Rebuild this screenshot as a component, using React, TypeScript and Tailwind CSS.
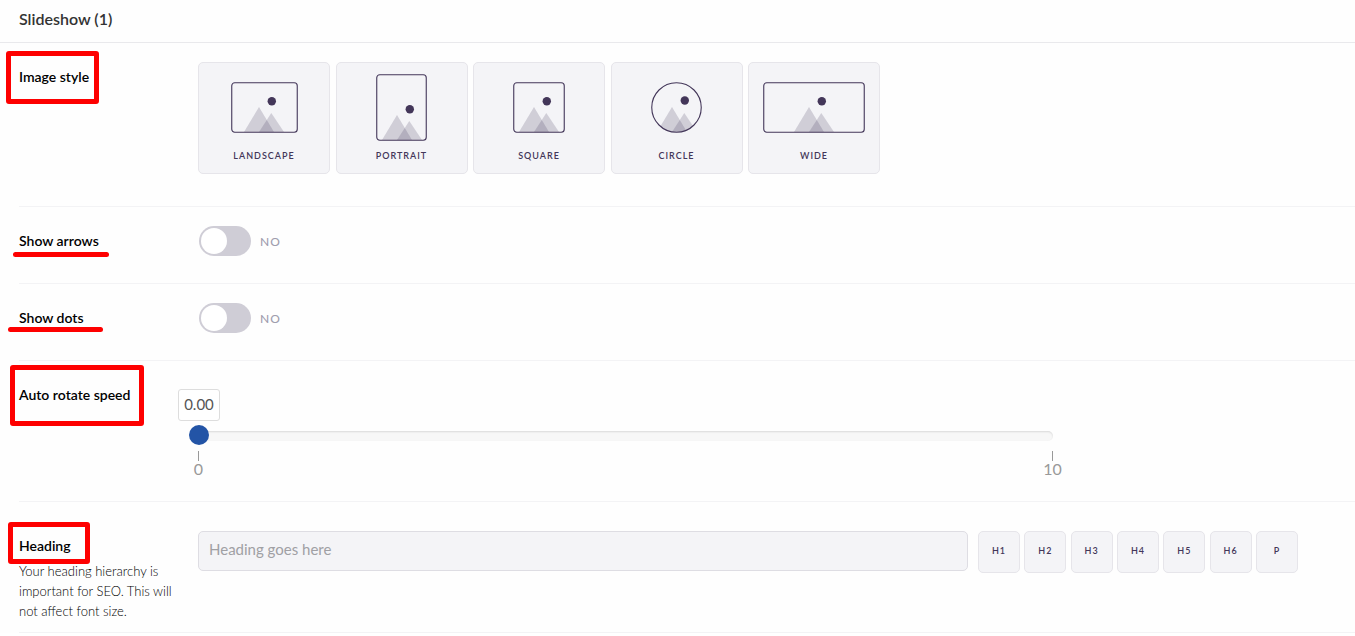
import React from "react";

const imageStyles = [
  { id: "landscape", label: "Landscape", width: 67, height: 51, peak: 28 },
  { id: "portrait", label: "Portrait", width: 51, height: 67, peak: 21 },
  { id: "square", label: "Square", width: 52, height: 51, peak: 21 },
  { id: "circle", label: "Circle", width: 51, height: 51, peak: 21 },
  { id: "wide", label: "Wide", width: 102, height: 51, peak: 46 },
];

const headingTags = ["H1", "H2", "H3", "H4", "H5", "H6", "P"];

type FrameProps = {
  id: string;
  width: number;
  height: number;
  peak: number;
};

const FrameIcon: React.FC<FrameProps> = ({ id, width, height, peak }) => {
  const round = id === "circle";
  return (
    <svg width={width} height={height} viewBox={`0 0 ${width} ${height}`} fill="none">
      <clipPath id={`clip-${id}`}>
        <rect width={width} height={height} rx={round ? width / 2 : 3} />
      </clipPath>
      <g clipPath={`url(#clip-${id})`}>
        <g transform={`translate(${peak} ${height - 1})`} fill="#433659">
          <path d="M0 -25 L15 0 H-15 Z" fillOpacity="0.2" />
          <path d="M12.3 -19 L25 0 H0 Z" fillOpacity="0.2" />
          <circle cx="12.8" cy={round ? -31.5 : -30.7} r="4.2" />
        </g>
      </g>
      <rect
        x="0.75"
        y="0.75"
        width={width - 1.5}
        height={height - 1.5}
        rx={round ? width / 2 : 3}
        stroke="#433659"
        strokeWidth="1.1"
      />
    </svg>
  );
};

type RowProps = {
  label: string;
  htmlFor?: string;
  help?: string;
  mark: string;
  className: string;
  children: React.ReactNode;
};

const Row: React.FC<RowProps> = ({ label, htmlFor, help, mark, className, children }) => (
  <div className={`relative ml-[19px] flex border-b border-[#f3f3f5] ${className}`}>
    <div className="w-[179px] shrink-0 pt-[5px] pr-5">
      <label htmlFor={htmlFor} className="block text-[14px] leading-5 font-semibold text-black">
        {label}
      </label>
      {help && <p className="mt-[5px] text-[13px] leading-5 font-light text-black">{help}</p>}
    </div>
    <div className="min-w-0 flex-1 pr-[57px]">{children}</div>
    <span className={`pointer-events-none absolute ${mark}`} />
  </div>
);

const Toggle: React.FC<{ id: string }> = ({ id }) => {
  const [on, setOn] = React.useState(false);
  return (
    <div className="flex items-center gap-[9px] pl-px">
      <input
        id={id}
        type="checkbox"
        checked={on}
        onChange={(e) => setOn(e.target.checked)}
        className="h-[30px] w-[52px] appearance-none rounded-full bg-[#cfcdd6] p-[2px] before:block before:size-[26px] before:rounded-full before:bg-white checked:bg-[#2354a6] checked:before:ml-[22px]"
      />
      <span className="pt-[2px] text-[12px] leading-5 font-medium tracking-[1px] text-[#a09dae]">
        {on ? "YES" : "NO"}
      </span>
    </div>
  );
};

export default function App() {
  const [speed, setSpeed] = React.useState(0);

  return (
    <div className="bg-[#fefefe] font-['Lato',sans-serif]">
      <header className="border-b border-[#e9e9ec] px-[19px] pt-[7px] pb-[11px]">
        <h1 className="text-[16px] leading-6 font-semibold text-[#333]">Slideshow (1)</h1>
      </header>

      <Row
        label="Image style"
        className="pt-[19px] pb-8"
        mark="top-2 -left-[13px] h-[53px] w-[93px] rounded-[3px] border-[5px] border-[#fe0000]"
      >
        <div className="flex max-w-[682px] justify-between">
          {imageStyles.map((style) => (
            <button
              key={style.id}
              type="button"
              className="flex h-[112px] w-[132px] flex-col items-center rounded-[5px] border border-[#e6e5ea] bg-[#f4f4f7] pt-[11px]"
            >
              <span className="flex h-[67px] items-center">
                <FrameIcon
                  id={style.id}
                  width={style.width}
                  height={style.height}
                  peak={style.peak}
                />
              </span>
              <span className="mt-[7px] text-[9px] leading-4 font-semibold tracking-[1px] text-[#433659] uppercase">
                {style.label}
              </span>
            </button>
          ))}
        </div>
      </Row>

      <Row
        label="Show arrows"
        htmlFor="arrows"
        className="pt-[19px] pb-[27px]"
        mark="top-[45px] -left-[6px] h-[5px] w-24 rounded-full bg-[#fe0000]"
      >
        <Toggle id="arrows" />
      </Row>

      <Row
        label="Show dots"
        htmlFor="dots"
        className="pt-[19px] pb-[27px]"
        mark="top-[43px] -left-[11px] h-[5px] w-[95px] rounded-full bg-[#fe0000]"
      >
        <Toggle id="dots" />
      </Row>

      <Row
        label="Auto rotate speed"
        htmlFor="speed"
        className="pt-[19px] pb-[22px]"
        mark="top-1 -left-[9px] h-[61px] w-[134px] rounded-[3px] border-[5px] border-[#fe0000]"
      >
        <div className="max-w-[855px] pt-[9px]">
          <output
            htmlFor="speed"
            className="-ml-5 flex h-8 w-[42px] items-center justify-center rounded-[3px] border border-[#dddddd] bg-white pb-[2px] text-[15px] leading-5 text-[#555]"
          >
            {speed.toFixed(2)}
          </output>
          <div className="relative mt-[10px] h-[10px] rounded-[5px] bg-[#f7f7f7] shadow-[inset_0_1px_2px_rgba(0,0,0,0.12)]">
            <input
              id="speed"
              type="range"
              min="0"
              max="10"
              step="0.5"
              value={speed}
              onChange={(e) => setSpeed(Number(e.target.value))}
              className="absolute -top-[6px] -left-[9px] h-5 w-[calc(100%+18px)] appearance-none bg-transparent [&::-webkit-slider-thumb]:size-5 [&::-webkit-slider-thumb]:appearance-none [&::-webkit-slider-thumb]:rounded-full [&::-webkit-slider-thumb]:bg-[#2354a6]"
            />
          </div>
          <div className="-mx-[10px] mt-[10px] flex justify-between text-[16px] leading-4 text-[#999]">
            {[0, 10].map((tick) => (
              <span key={tick} className="flex w-[21px] flex-col items-center pb-[2px]">
                <span className="h-[10px] w-px bg-[#999]" />
                {tick}
              </span>
            ))}
          </div>
        </div>
      </Row>

      <Row
        label="Heading"
        htmlFor="heading"
        help="Your heading hierarchy is important for SEO. This will not affect font size."
        className="pt-[29px] pb-[11px]"
        mark="top-5 -left-[11px] h-[42px] w-[82px] rounded-[3px] border-[5px] border-[#fe0000]"
      >
        <div className="flex items-start gap-[10px]">
          <input
            id="heading"
            type="text"
            placeholder="Heading goes here"
            className="h-10 min-w-0 flex-1 rounded-[5px] border border-[#dedde3] bg-[#f4f4f7] px-[10px] pb-1 text-[15px] text-[#333] placeholder:text-[#a0a0a4]"
          />
          <div className="flex w-[320px] shrink-0 justify-between">
            {headingTags.map((tag) => (
              <button
                key={tag}
                type="button"
                className="size-[42px] rounded-[5px] border border-[#e6e5ea] bg-[#f4f4f7] pb-[2px] text-[9px] leading-4 font-semibold tracking-[1px] text-[#433659]"
              >
                {tag}
              </button>
            ))}
          </div>
        </div>
      </Row>
    </div>
  );
}
